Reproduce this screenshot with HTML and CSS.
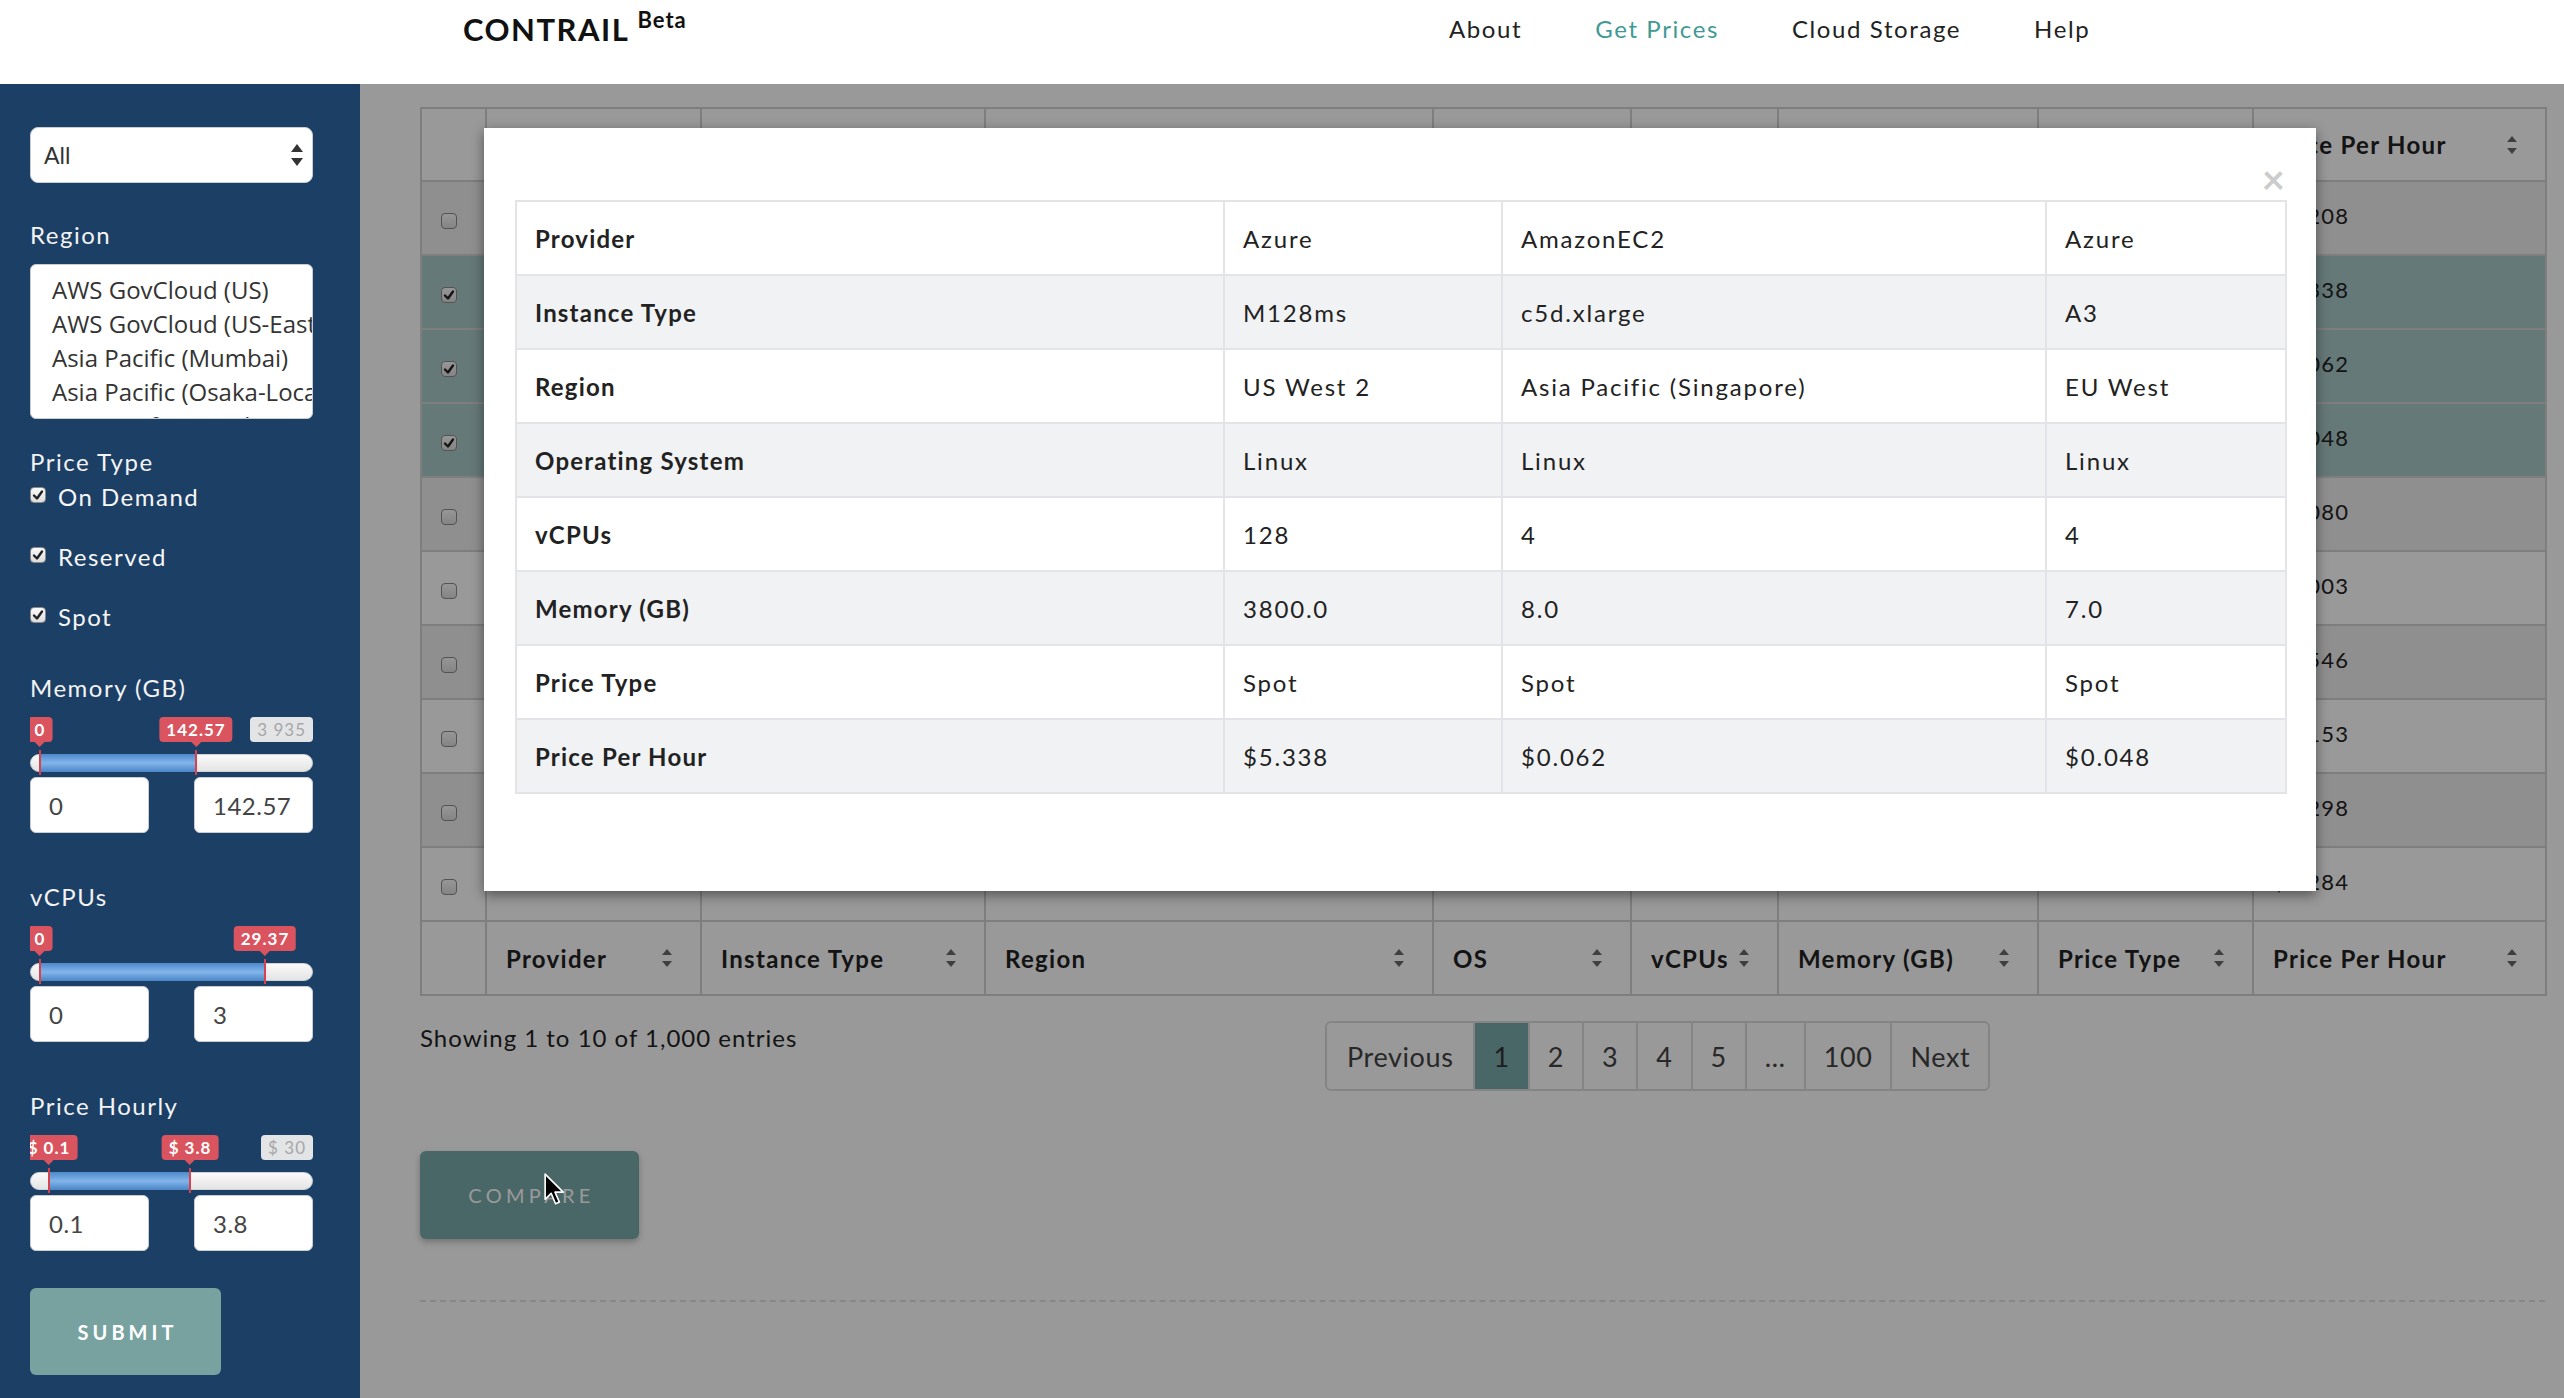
FILE: index.html
```html
<!DOCTYPE html>
<html lang="en">
<head>
<meta charset="utf-8">
<title>Contrail - Get Prices</title>
<link rel="stylesheet" href="styles.css">
</head>
<body>
<header class="topbar">
  <div class="brand">CONTRAIL <sup>Beta</sup></div>
  <nav class="nav">
    <a>About</a>
    <a class="active">Get Prices</a>
    <a>Cloud Storage</a>
    <a>Help</a>
  </nav>
</header>

<div class="layout">
  <aside class="sidebar">
    <div class="select">
      <span>All</span>
      <svg class="select-arrows" viewBox="0 0 12 22"><path d="M6 0L12 8H0z M0 14H12L6 22z"/></svg>
    </div>

    <div class="side-label region-label">Region</div>
    <div class="listbox">
      <div class="opt">AWS GovCloud (US)</div>
      <div class="opt">AWS GovCloud (US-East)</div>
      <div class="opt">Asia Pacific (Mumbai)</div>
      <div class="opt">Asia Pacific (Osaka-Local)</div>
      <div class="opt">Asia Pacific (Seoul)</div>
    </div>

    <div class="side-label type-label">Price Type</div>
    <label class="check-row"><span class="cb checked"><svg viewBox="0 0 12 12"><path d="M2 6.5L5 9.5L10 2.5"/></svg></span>On Demand</label>
    <label class="check-row"><span class="cb checked"><svg viewBox="0 0 12 12"><path d="M2 6.5L5 9.5L10 2.5"/></svg></span>Reserved</label>
    <label class="check-row last"><span class="cb checked"><svg viewBox="0 0 12 12"><path d="M2 6.5L5 9.5L10 2.5"/></svg></span>Spot</label>

    <div class="range-group">
      <div class="side-label">Memory (GB)</div>
      <div class="slider">
        <span class="badge" style="left:10px">0</span>
        <span class="badge" style="left:166px">142.57</span>
        <span class="badge max">3 935</span>
        <div class="track"></div>
        <div class="fill" style="left:10px;width:156px"></div>
        <span class="handle" style="left:9px"></span>
        <span class="handle" style="left:165px"></span>
      </div>
      <div class="inputs">
        <input class="num" type="text" value="0">
        <input class="num" type="text" value="142.57">
      </div>
    </div>

    <div class="range-group">
      <div class="side-label">vCPUs</div>
      <div class="slider">
        <span class="badge" style="left:10px">0</span>
        <span class="badge" style="left:235px">29.37</span>
        <div class="track"></div>
        <div class="fill" style="left:10px;width:225px"></div>
        <span class="handle" style="left:9px"></span>
        <span class="handle" style="left:234px"></span>
      </div>
      <div class="inputs">
        <input class="num" type="text" value="0">
        <input class="num" type="text" value="3">
      </div>
    </div>

    <div class="range-group">
      <div class="side-label">Price Hourly</div>
      <div class="slider">
        <span class="badge" style="left:19px">$ 0.1</span>
        <span class="badge" style="left:160px">$ 3.8</span>
        <span class="badge max">$ 30</span>
        <div class="track"></div>
        <div class="fill" style="left:19px;width:141px"></div>
        <span class="handle" style="left:18px"></span>
        <span class="handle" style="left:159px"></span>
      </div>
      <div class="inputs">
        <input class="num" type="text" value="0.1">
        <input class="num" type="text" value="3.8">
      </div>
    </div>

    <button class="submit">SUBMIT</button>
  </aside>

  <main class="main">
    <table class="grid">
      <colgroup>
        <col style="width:65px"><col style="width:215px"><col style="width:284px"><col style="width:448px"><col style="width:198px"><col style="width:147px"><col style="width:260px"><col style="width:215px"><col style="width:293px">
      </colgroup>
      <thead>
        <tr>
          <th></th>
          <th><div class="th-inner"><span>Provider</span><svg class="sort" viewBox="0 0 10 18"><path d="M5 0L10 6H0z M0 12H10L5 18z"/></svg></div></th>
          <th><div class="th-inner"><span>Instance Type</span><svg class="sort" viewBox="0 0 10 18"><path d="M5 0L10 6H0z M0 12H10L5 18z"/></svg></div></th>
          <th><div class="th-inner"><span>Region</span><svg class="sort" viewBox="0 0 10 18"><path d="M5 0L10 6H0z M0 12H10L5 18z"/></svg></div></th>
          <th><div class="th-inner"><span>OS</span><svg class="sort" viewBox="0 0 10 18"><path d="M5 0L10 6H0z M0 12H10L5 18z"/></svg></div></th>
          <th><div class="th-inner"><span>vCPUs</span><svg class="sort" viewBox="0 0 10 18"><path d="M5 0L10 6H0z M0 12H10L5 18z"/></svg></div></th>
          <th><div class="th-inner"><span>Memory (GB)</span><svg class="sort" viewBox="0 0 10 18"><path d="M5 0L10 6H0z M0 12H10L5 18z"/></svg></div></th>
          <th><div class="th-inner"><span>Price Type</span><svg class="sort" viewBox="0 0 10 18"><path d="M5 0L10 6H0z M0 12H10L5 18z"/></svg></div></th>
          <th><div class="th-inner"><span>Price Per Hour</span><svg class="sort" viewBox="0 0 10 18"><path d="M5 0L10 6H0z M0 12H10L5 18z"/></svg></div></th>
        </tr>
      </thead>
      <tbody>
        <tr class="odd"><td class="cbcell"><span class="cb"></span></td><td>AmazonEC2</td><td>m5.xlarge</td><td>US East (Ohio)</td><td>Windows</td><td>4</td><td>16.0</td><td>On Demand</td><td>$0.208</td></tr>
        <tr class="sel"><td class="cbcell"><span class="cb checked"><svg viewBox="0 0 12 12"><path d="M2 6.5L5 9.5L10 2.5"/></svg></span></td><td>Azure</td><td>M128ms</td><td>US West 2</td><td>Linux</td><td>128</td><td>3800.0</td><td>Spot</td><td>$5.338</td></tr>
        <tr class="sel"><td class="cbcell"><span class="cb checked"><svg viewBox="0 0 12 12"><path d="M2 6.5L5 9.5L10 2.5"/></svg></span></td><td>AmazonEC2</td><td>c5d.xlarge</td><td>Asia Pacific (Singapore)</td><td>Linux</td><td>4</td><td>8.0</td><td>Spot</td><td>$0.062</td></tr>
        <tr class="sel"><td class="cbcell"><span class="cb checked"><svg viewBox="0 0 12 12"><path d="M2 6.5L5 9.5L10 2.5"/></svg></span></td><td>Azure</td><td>A3</td><td>EU West</td><td>Linux</td><td>4</td><td>7.0</td><td>Spot</td><td>$0.048</td></tr>
        <tr class="odd"><td class="cbcell"><span class="cb"></span></td><td>AmazonEC2</td><td>t3.small</td><td>EU (Frankfurt)</td><td>Linux</td><td>2</td><td>2.0</td><td>Reserved</td><td>$0.080</td></tr>
        <tr><td class="cbcell"><span class="cb"></span></td><td>AmazonEC2</td><td>t2.nano</td><td>US West (Oregon)</td><td>Linux</td><td>1</td><td>0.5</td><td>Spot</td><td>$0.003</td></tr>
        <tr class="odd"><td class="cbcell"><span class="cb"></span></td><td>Azure</td><td>D8s v3</td><td>US East</td><td>Windows</td><td>8</td><td>32.0</td><td>On Demand</td><td>$0.546</td></tr>
        <tr><td class="cbcell"><span class="cb"></span></td><td>AmazonEC2</td><td>r5.large</td><td>Canada (Central)</td><td>Linux</td><td>2</td><td>16.0</td><td>On Demand</td><td>$0.153</td></tr>
        <tr class="odd"><td class="cbcell"><span class="cb"></span></td><td>Azure</td><td>E4s v3</td><td>UK South</td><td>Windows</td><td>4</td><td>32.0</td><td>On Demand</td><td>$0.298</td></tr>
        <tr><td class="cbcell"><span class="cb"></span></td><td>Azure</td><td>D4 v3</td><td>EU North</td><td>Linux</td><td>4</td><td>28.0</td><td>On Demand</td><td>$0.284</td></tr>
      </tbody>
      <tfoot>
        <tr>
          <th></th>
          <th><div class="th-inner"><span>Provider</span><svg class="sort" viewBox="0 0 10 18"><path d="M5 0L10 6H0z M0 12H10L5 18z"/></svg></div></th>
          <th><div class="th-inner"><span>Instance Type</span><svg class="sort" viewBox="0 0 10 18"><path d="M5 0L10 6H0z M0 12H10L5 18z"/></svg></div></th>
          <th><div class="th-inner"><span>Region</span><svg class="sort" viewBox="0 0 10 18"><path d="M5 0L10 6H0z M0 12H10L5 18z"/></svg></div></th>
          <th><div class="th-inner"><span>OS</span><svg class="sort" viewBox="0 0 10 18"><path d="M5 0L10 6H0z M0 12H10L5 18z"/></svg></div></th>
          <th><div class="th-inner"><span>vCPUs</span><svg class="sort" viewBox="0 0 10 18"><path d="M5 0L10 6H0z M0 12H10L5 18z"/></svg></div></th>
          <th><div class="th-inner"><span>Memory (GB)</span><svg class="sort" viewBox="0 0 10 18"><path d="M5 0L10 6H0z M0 12H10L5 18z"/></svg></div></th>
          <th><div class="th-inner"><span>Price Type</span><svg class="sort" viewBox="0 0 10 18"><path d="M5 0L10 6H0z M0 12H10L5 18z"/></svg></div></th>
          <th><div class="th-inner"><span>Price Per Hour</span><svg class="sort" viewBox="0 0 10 18"><path d="M5 0L10 6H0z M0 12H10L5 18z"/></svg></div></th>
        </tr>
      </tfoot>
    </table>

    <div class="table-foot">
      <div class="info">Showing 1 to 10 of 1,000 entries</div>
      <ul class="pager">
        <li class="edge">Previous</li>
        <li class="current">1</li>
        <li>2</li>
        <li>3</li>
        <li>4</li>
        <li>5</li>
        <li>…</li>
        <li>100</li>
        <li>Next</li>
      </ul>
    </div>

    <button class="compare">COMPARE</button>
    <div class="dashed"></div>

    <div class="backdrop"></div>

    <div class="modal">
      <button class="close">×</button>
      <table class="compare-table">
        <colgroup><col style="width:708px"><col style="width:278px"><col style="width:544px"><col style="width:240px"></colgroup>
        <tbody>
          <tr><th>Provider</th><td>Azure</td><td>AmazonEC2</td><td>Azure</td></tr>
          <tr><th>Instance Type</th><td>M128ms</td><td>c5d.xlarge</td><td>A3</td></tr>
          <tr><th>Region</th><td>US West 2</td><td>Asia Pacific (Singapore)</td><td>EU West</td></tr>
          <tr><th>Operating System</th><td>Linux</td><td>Linux</td><td>Linux</td></tr>
          <tr><th>vCPUs</th><td>128</td><td>4</td><td>4</td></tr>
          <tr><th>Memory (GB)</th><td>3800.0</td><td>8.0</td><td>7.0</td></tr>
          <tr><th>Price Type</th><td>Spot</td><td>Spot</td><td>Spot</td></tr>
          <tr><th>Price Per Hour</th><td>$5.338</td><td>$0.062</td><td>$0.048</td></tr>
        </tbody>
      </table>
    </div>
  </main>
</div>

<svg class="cursor" viewBox="0 0 20 31"><path d="M1 1V24L6.5 18.5L10.5 28L14 26.5L10 17.5H17.5Z"/></svg>
</body>
</html>
```
FILE: styles.css
```css
* { box-sizing: border-box; }
html, body { margin: 0; padding: 0; }
body {
  width: 2564px;
  height: 1398px;
  overflow: hidden;
  position: relative;
  font-family: Lato, "Liberation Sans", sans-serif;
  color: #222;
  background: #fff;
}

/* ---------- top bar ---------- */
.topbar {
  height: 84px;
  display: flex;
  align-items: flex-start;
  padding: 9px 0 0 463px;
  background: #fff;
}
.brand {
  width: 986px;
  font-size: 31px;
  font-weight: 700;
  letter-spacing: 1.5px;
  line-height: 40px;
  color: #111;
}
.brand sup {
  font-size: 22px;
  line-height: 0;
  letter-spacing: 1px;
  vertical-align: 13px;
}
.nav {
  display: flex;
  gap: 73px;
  font-size: 24px;
  letter-spacing: 1.6px;
  line-height: 40px;
}
.nav a { color: #222; }
.nav a.active { color: #3f9a96; }

/* ---------- layout ---------- */
.layout {
  display: flex;
  height: 1314px;
}

/* ---------- sidebar ---------- */
.sidebar {
  width: 360px;
  flex-shrink: 0;
  background: #1c3f66;
  padding: 43px 47px 0 30px;
  color: #f3f3f3;
  display: flex;
  flex-direction: column;
  align-items: stretch;
}
.select {
  height: 56px;
  background: #fff;
  border: 1px solid #c9ccd1;
  border-radius: 8px;
  display: flex;
  align-items: center;
  justify-content: space-between;
  padding: 0 9px 0 13px;
  font-size: 23px;
  color: #333;
  margin-bottom: 37px;
}
.select-arrows { width: 12px; height: 22px; fill: #333; }

.side-label {
  font-size: 24px;
  line-height: 30px;
  letter-spacing: 1.5px;
  color: #f3f3f3;
}
.region-label { margin-bottom: 14px; }
.listbox {
  height: 155px;
  background: #fff;
  border: 1px solid #c9ccd1;
  border-radius: 6px;
  overflow: hidden;
  padding: 8px 0 0 21px;
  margin-bottom: 28px;
}
.opt {
  font-family: "Open Sans", Lato, sans-serif;
  font-size: 24px;
  line-height: 34px;
  color: #333;
  white-space: nowrap;
}
.type-label { margin-bottom: 5px; }

.check-row {
  display: flex;
  align-items: flex-start;
  height: 30px;
  font-size: 24px;
  line-height: 30px;
  letter-spacing: 1.5px;
  color: #f6f6f6;
  margin-bottom: 30px;
}
.check-row.last { margin-bottom: 41px; }
.check-row .cb { margin: 5px 12px 0 0; }

.cb {
  display: inline-flex;
  align-items: center;
  justify-content: center;
  width: 16px;
  height: 16px;
  border: 1px solid #8a8a8a;
  border-radius: 4px;
  background: linear-gradient(#fbfbfb, #dcdcdc);
  flex-shrink: 0;
}
.cb svg { width: 12px; height: 12px; fill: none; stroke: #222; stroke-width: 2.4; stroke-linecap: round; stroke-linejoin: round; }

.range-group { margin-bottom: 49px; }
.range-group .side-label { margin-bottom: 14px; }
.slider {
  position: relative;
  height: 58px;
  overflow: hidden;
  margin-bottom: 2px;
}
.badge {
  position: absolute;
  top: 0;
  height: 25px;
  line-height: 25px;
  padding: 0 7px;
  border-radius: 4px;
  background: #d9545e;
  color: #fff;
  font-size: 17px;
  font-weight: 700;
  letter-spacing: 1px;
  white-space: nowrap;
  transform: translateX(-50%);
}
.badge::after {
  content: "";
  position: absolute;
  left: 50%;
  bottom: -5px;
  margin-left: -5px;
  border-left: 5px solid transparent;
  border-right: 5px solid transparent;
  border-top: 5px solid #d9545e;
}
.badge.max {
  left: auto;
  right: 0;
  transform: none;
  background: #e3e4e6;
  color: #a6a6a6;
  font-weight: 400;
}
.badge.max::after { display: none; }
.track {
  position: absolute;
  left: 0;
  right: 0;
  top: 37px;
  height: 18px;
  border-radius: 9px;
  border: 1px solid #cfd2d6;
  background: linear-gradient(#fafafa, #e4e4e4);
}
.fill {
  position: absolute;
  top: 37px;
  height: 18px;
  background: linear-gradient(#4d89cc, #82b5ea 50%, #4a85c6);
}
.handle {
  position: absolute;
  top: 33px;
  width: 2px;
  height: 25px;
  background: #d9414c;
}
.inputs {
  display: flex;
  justify-content: space-between;
}
.num {
  width: 119px;
  height: 56px;
  border: 1px solid #c9ccd1;
  border-radius: 6px;
  background: #fff;
  padding: 0 0 0 18px;
  font-family: Lato, "Liberation Sans", sans-serif;
  font-size: 24px;
  letter-spacing: 0.5px;
  color: #444;
  outline: none;
}
.submit {
  width: 191px;
  height: 87px;
  margin-top: -12px;
  border: none;
  border-radius: 6px;
  background: #77a29f;
  color: #fff;
  font-family: Lato, "Liberation Sans", sans-serif;
  font-size: 20px;
  font-weight: 700;
  letter-spacing: 4px;
  padding: 0 0 0 4px;
}

/* ---------- main ---------- */
.main {
  flex: 1;
  position: relative;
  padding: 23px 19px 0 60px;
  background: #fff;
  overflow: hidden;
}
.grid {
  width: 2125px;
  table-layout: fixed;
  border-collapse: collapse;
  border: 2px solid #d2d2d2;
  font-size: 22px;
  letter-spacing: 1.2px;
}
.grid th, .grid td {
  border: 2px solid #d2d2d2;
  padding: 0 28px 0 19px;
  height: 74px;
  text-align: left;
  white-space: nowrap;
  overflow: hidden;
  color: #222;
}
.grid tbody td { padding-bottom: 6px; }
.grid thead th { height: 73px; }
.grid th {
  font-size: 24px;
  font-weight: 700;
  letter-spacing: 1.3px;
  background: #fff;
}
.th-inner {
  display: flex;
  align-items: center;
  justify-content: space-between;
}
.sort { width: 10px; height: 18px; fill: #6a6a6a; flex-shrink: 0; }
.grid tbody td.cbcell { padding: 0 0 0 19px; }
.grid td.cbcell .cb { vertical-align: middle; }
.grid tbody tr { background: #fff; }
.grid tbody tr.odd { background: #efefef; }
.grid tbody tr.sel { background: #aacaca; }

.table-foot {
  display: grid;
  grid-template-columns: 905px auto;
  align-items: start;
  margin-top: 25px;
}
.info {
  font-size: 24px;
  line-height: 30px;
  letter-spacing: 1px;
  margin-top: 2px;
  color: #222;
}
.pager {
  display: flex;
  width: max-content;
  list-style: none;
  margin: 0;
  padding: 0;
  height: 70px;
  border: 2px solid #dcdcdc;
  border-radius: 6px;
  overflow: hidden;
  font-size: 27px;
  letter-spacing: 0.6px;
}
.pager li {
  display: flex;
  align-items: center;
  padding: 0 18px;
  border-left: 2px solid #dcdcdc;
  color: #444;
}
.pager li.edge { padding: 0 20px; border-left: none; }
.pager li.current { background: #7bacab; color: #333; }

.compare {
  display: block;
  margin-top: 60px;
  width: 219px;
  height: 88px;
  border: none;
  border-radius: 6px;
  background: #7bacac;
  box-shadow: 0 3px 6px rgba(0,0,0,0.25);
  color: #fff;
  font-family: Lato, "Liberation Sans", sans-serif;
  font-size: 20px;
  letter-spacing: 4.3px;
  padding: 0 0 0 4px;
}
.dashed {
  width: 2125px;
  margin-top: 61px;
  border-top: 2px dashed #e2e2e2;
}

/* ---------- modal ---------- */
.backdrop {
  position: absolute;
  inset: 0;
  background: rgba(0,0,0,0.4);
  z-index: 10;
}
.modal {
  position: absolute;
  left: 124px;
  top: 44px;
  width: 1832px;
  height: 763px;
  background: #fff;
  padding: 72px 31px 0 31px;
  box-shadow: 0 4px 12px rgba(0,0,0,0.45);
  z-index: 20;
}
.close {
  position: absolute;
  top: 31px;
  right: 31px;
  border: none;
  background: none;
  padding: 0;
  font-family: Lato, "Liberation Sans", sans-serif;
  font-size: 40px;
  font-weight: 700;
  line-height: 1;
  color: #cccccc;
}
.compare-table {
  width: 1770px;
  table-layout: fixed;
  border-collapse: collapse;
  border: 2px solid #e2e4e8;
}
.compare-table th, .compare-table td {
  border: 2px solid #e2e4e8;
  height: 74px;
  padding: 0 18px;
  text-align: left;
  font-size: 24px;
  color: #222;
  white-space: nowrap;
}
.compare-table th { font-weight: 700; letter-spacing: 1.2px; }
.compare-table td { letter-spacing: 1.8px; }
.compare-table tr:nth-child(even) { background: #f1f2f4; }

/* ---------- pointer ---------- */
.cursor {
  position: absolute;
  left: 544px;
  top: 1173px;
  width: 22px;
  height: 34px;
  z-index: 100;
  fill: #000;
  stroke: #fff;
  stroke-width: 1.5;
  stroke-linejoin: round;
}
```
